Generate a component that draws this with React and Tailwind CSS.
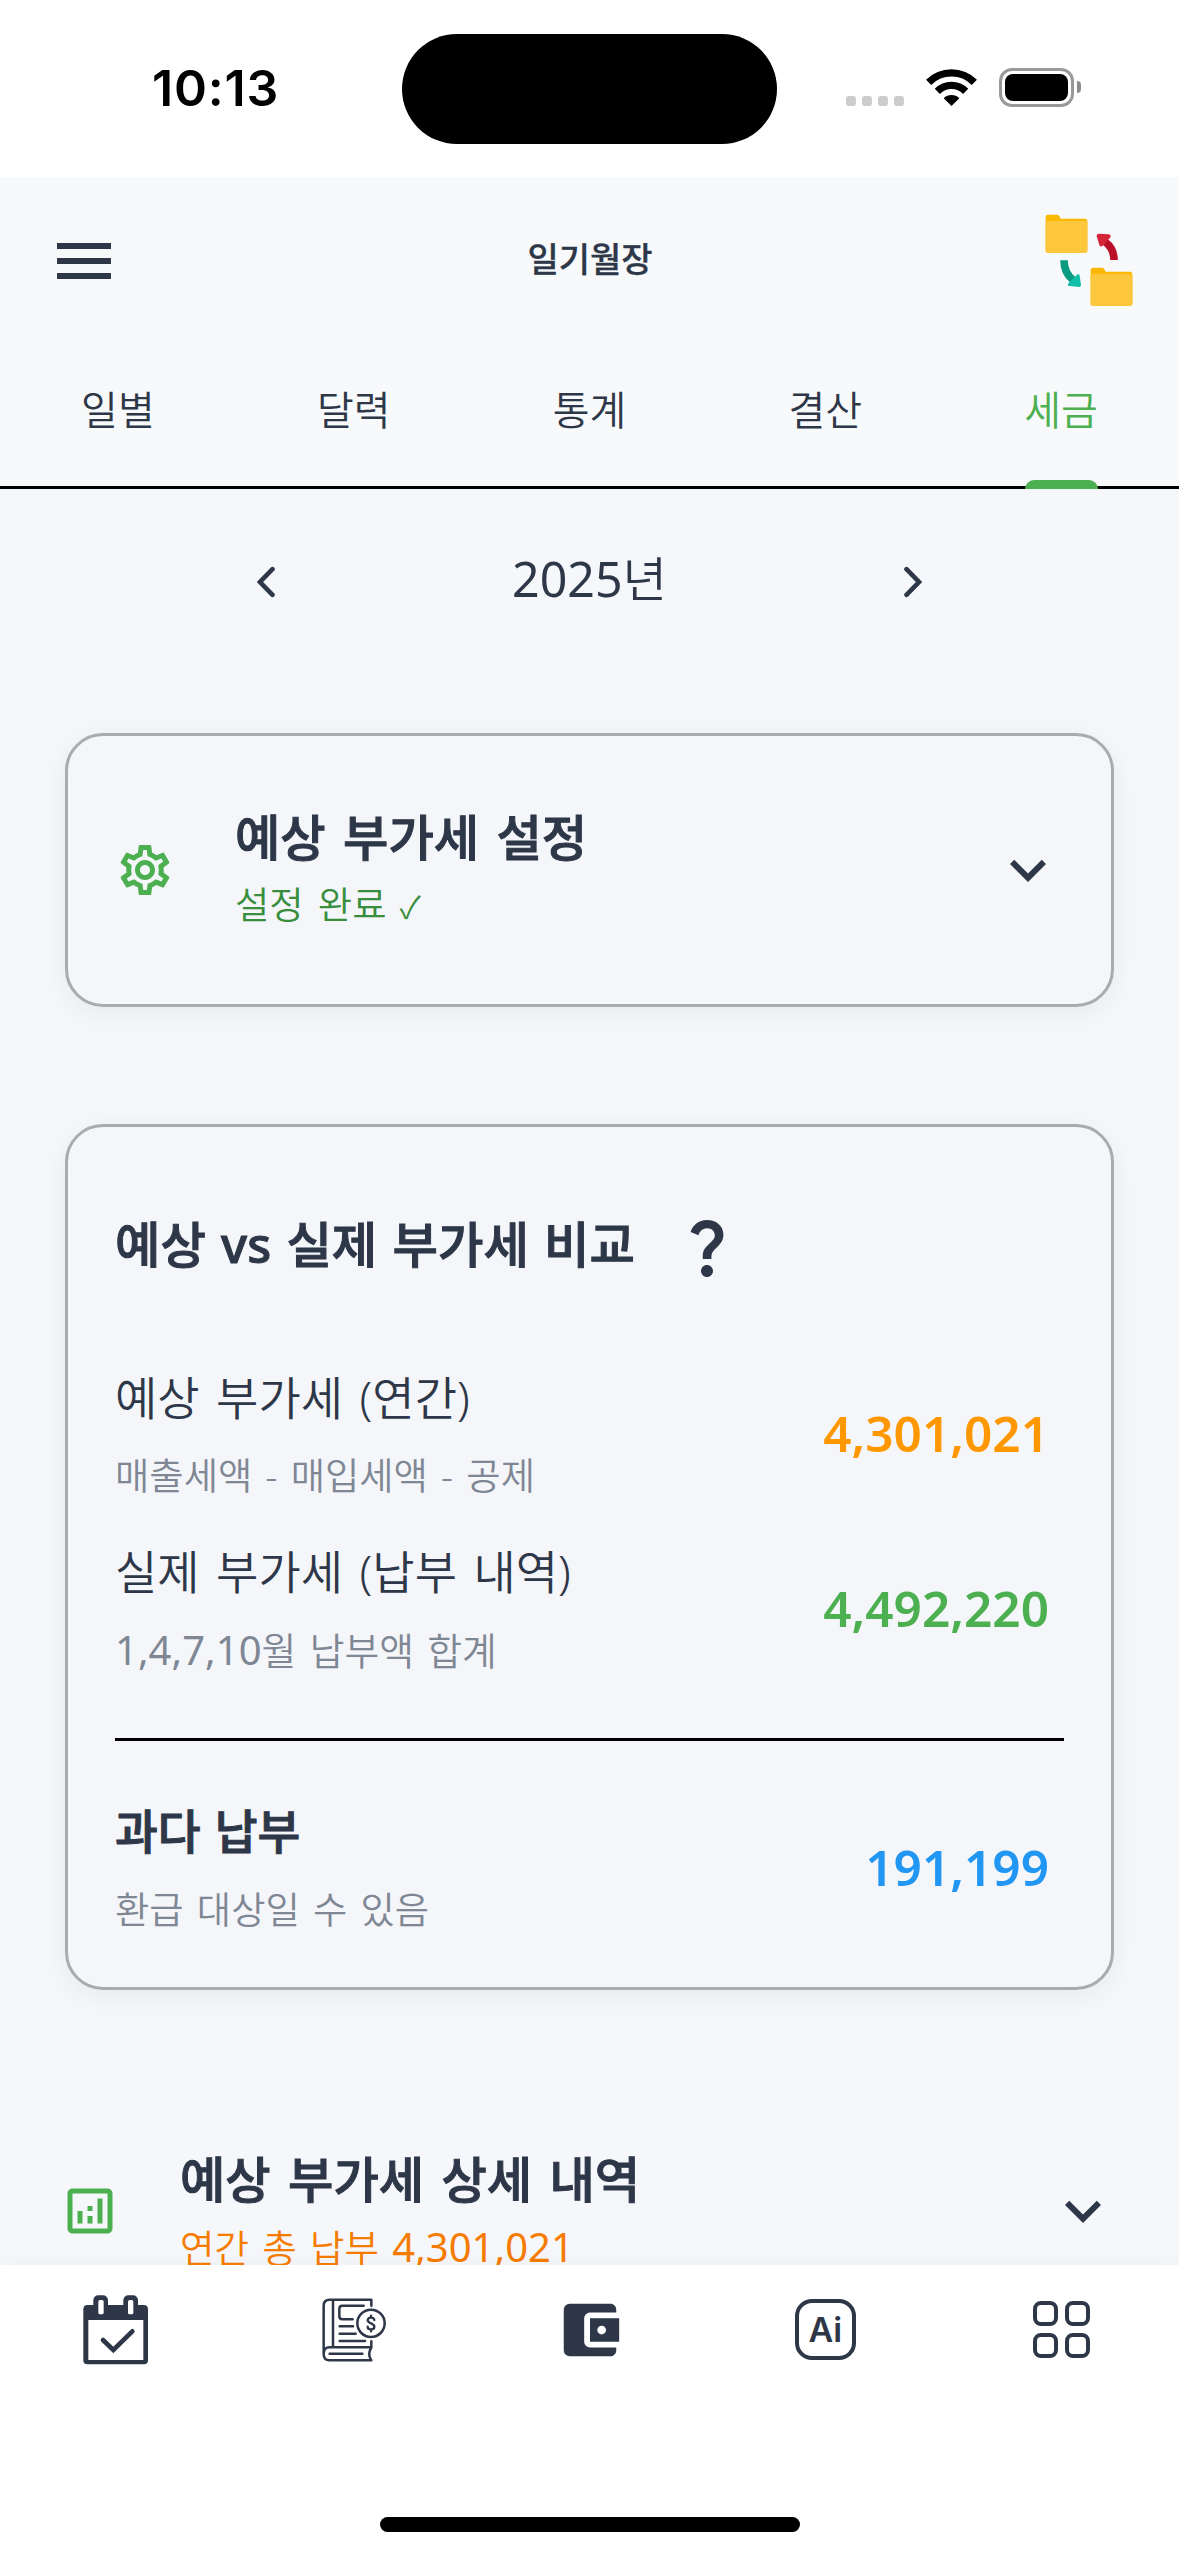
import React from "react";
import {
  MdMenu,
  MdOutlineSettings,
  MdKeyboardArrowDown,
  MdQuestionMark,
  MdOutlineAnalytics,
  MdAccountBalanceWallet,
} from "react-icons/md";

const tabs = ["일별", "달력", "통계", "결산", "세금"];

function StatusBar() {
  return (
    <div className="relative flex h-[177px] shrink-0 items-start justify-between bg-white pl-[152px] pr-[98px]">
      <span className="mt-[58px] font-[Inter,sans-serif] text-[50px] font-semibold leading-[60px] tracking-[0.8px] text-black">
        10:13
      </span>
      <div className="absolute left-[402px] top-[34px] h-[110px] w-[375px] rounded-full bg-black" />
      <div className="mt-[68px] flex items-start">
        <div className="mt-[28px] flex gap-[6px]">
          {[0, 1, 2, 3].map((i) => (
            <span key={i} className="size-[10px] rounded-[3px] bg-[#cccccc]" />
          ))}
        </div>
        <svg className="ml-[22px] h-[39px] w-[51px]" viewBox="288 54 153 117" fill="none" stroke="#000" strokeWidth="22">
          <path d="M296 97a97 97 0 0 1 137 0" />
          <path d="M322 124a60 60 0 0 1 85 0" />
          <path d="M341 145a33 33 0 0 1 47 0L364.500 168Z" fill="#000" stroke="none" />
        </svg>
        <div className="ml-[22px] flex h-[39px] w-[75px] rounded-[13px] border-[3px] border-[#999999] p-[3px]">
          <div className="flex-1 rounded-[8px] bg-black" />
        </div>
        <div className="ml-[3px] mt-[13px] h-[12px] w-[4px] rounded-r-full bg-[#8c8c8c]" />
      </div>
    </div>
  );
}

function Folder({ x, y }) {
  return (
    <g transform={`translate(${x} ${y})`}>
      <path d="M1 22V7q0-7 7-7h27q6 0 8 6l3 6h72q8 0 8 8v10H1Z" fill="#fbb800" />
      <rect x="0" y="19" width="127" height="96" rx="8" fill="#fcc63d" />
    </g>
  );
}

function FolderSwap() {
  return (
    <svg className="h-[94px] w-[90px]" viewBox="135 74 270 282">
      <Folder x={136} y={76} />
      <Folder x={271} y={235} />
      <path d="M342 212q0-34-26-54" fill="none" stroke="#ba1029" strokeWidth="23" />
      <path d="M297 136l29 2q5 1 2 5l-22 24q-4 3-5-1l-8-26q0-4 4-4Z" fill="#d32739" stroke="#d32739" strokeWidth="6" />
      <path d="M192 213q0 38 27 59" fill="none" stroke="#0b9b80" strokeWidth="23" />
      <path d="M206 284l27-27q3-2 4 2l4 28q0 4-4 4l-28-3q-5 0-3-4Z" fill="#10bfa8" stroke="#10bfa8" strokeWidth="4" />
    </svg>
  );
}

function Header() {
  return (
    <header className="h-[312px] shrink-0 border-b-[3px] border-black bg-[#f7f9fa] text-[#2d3748]">
      <div className="grid h-[165px] grid-cols-[1fr_auto_1fr] items-center pl-12 pr-[44px]">
        <MdMenu className="mt-[3px] size-[72px]" />
        <h1 className="mb-[2px] -ml-[3px] text-[34px] font-medium leading-[60px] [-webkit-text-stroke:0.3px]">일기월장</h1>
        <div className="mt-[3px] justify-self-end">
          <FolderSwap />
        </div>
      </div>
      <nav className="grid h-[147px] grid-cols-5">
        {tabs.map((t) => (
          <div
            key={t}
            className={
              t === "세금"
                ? "flex flex-col items-center text-[40px] text-[#4caf50]"
                : "flex flex-col items-center text-[40px]"
            }
          >
            <span className="mt-[38px] leading-[60px]">{t}</span>
            {t === "세금" && <span className="mt-[40px] h-[9px] w-[73px] shrink-0 rounded-t-[9px] bg-[#4caf50]" />}
          </div>
        ))}
      </nav>
    </header>
  );
}

function Chevron({ d }) {
  return (
    <svg className="h-[32px] w-[18px]" viewBox="0 0 18 32" fill="none" stroke="currentColor" strokeWidth="4.600" strokeLinecap="round">
      <path d={d} />
    </svg>
  );
}

function YearPicker() {
  return (
    <div className="mx-[257px] flex h-[185px] items-center justify-between">
      <Chevron d="M15.500 3.200L3 16l12.500 12.800" />
      <span className="mb-[7px] text-[48.300px] leading-[60px]">
        <span className="font-normal">2025</span>년
      </span>
      <Chevron d="M2.500 3.200L15 16L2.500 28.800" />
    </div>
  );
}

function Panel({ className, children }) {
  return (
    <section
      className={`mx-[65px] rounded-[38px] border-[3px] border-[#a9abae] bg-[#f4f6fa] shadow-[0_6px_30px_rgba(0,0,0,0.06)] ${className}`}
    >
      {children}
    </section>
  );
}

function Expandable({ icon, title, sub, subClass, textClass }) {
  return (
    <div className="flex items-center">
      <div className="shrink-0">{icon}</div>
      <div className={`ml-[60px] flex-1 ${textClass}`}>
        <h2 className="text-[49.300px] font-medium leading-[72px] [-webkit-text-stroke:1px] [word-spacing:4.500px]">{title}</h2>
        <p className={`leading-[63px] ${subClass}`}>{sub}</p>
      </div>
      <MdKeyboardArrowDown className="size-[72px]" />
    </div>
  );
}

function Row({ label, sub, value, valueClass, strong }) {
  return (
    <div className="flex h-[155px] items-center justify-between">
      <div>
        <p
          className={
            strong
              ? "text-[46.500px] font-medium leading-[76px] [-webkit-text-stroke:1px] [word-spacing:2px]"
              : "text-[46px] leading-[76px] [word-spacing:4.500px]"
          }
        >
          {label}
        </p>
        <p className="mt-[3px] text-[37.300px] leading-[75px] text-[#808794] [word-spacing:3.500px]">{sub}</p>
      </div>
      <span className={`mb-[6px] mr-[15px] text-[49.500px] font-semibold leading-[60px] ${valueClass}`}>{value}</span>
    </div>
  );
}

function Comparison() {
  return (
    <Panel className="mt-[117px] h-[866px] px-[47px] pt-[67px]">
      <div className="mb-16 flex h-[100px] items-center">
        <h2 className="w-[520px] whitespace-nowrap text-[49.400px] font-medium leading-[72px] [-webkit-text-stroke:1px] [word-spacing:2.400px]">
          예상 vs 실제 부가세 비교
        </h2>
        <MdQuestionMark className="ml-[36px] mt-[6px] size-[72px]" />
      </div>
      <div className="flex flex-col gap-5">
        <Row label="예상 부가세 (연간)" sub="매출세액 - 매입세액 - 공제" value="4,301,021" valueClass="text-[#ff9800]" />
        <Row
          label="실제 부가세 (납부 내역)"
          sub={
            <>
              <span className="text-[40px] font-normal">1,4,7,10</span>
              <span className="text-[37.800px]">월 납부액 합계</span>
            </>
          }
          value="4,492,220"
          valueClass="text-[#4caf50]"
        />
      </div>
      <div className="mb-[51px] mt-[50px] h-[3px] bg-black" />
      <Row strong label="과다 납부" sub="환급 대상일 수 있음" value="191,199" valueClass="text-[#2196f3]" />
    </Panel>
  );
}

function CalendarIcon() {
  return (
    <svg className="h-[70px] w-[66px]" viewBox="68 43 198 210" fill="none" stroke="#2d3748">
      <path d="M82 73h168q13 0 13 13v153q0 12-12 12H81q-12 0-12-12V86q0-13 13-13Z" fill="#2d3748" stroke="none" />
      <path d="M84 118h165v120H84Z" fill="#fff" stroke="none" />
      <rect x="99" y="44" width="44" height="60" rx="15" fill="#2d3748" stroke="none" />
      <rect x="189" y="44" width="44" height="60" rx="15" fill="#2d3748" stroke="none" />
      <rect x="114" y="58" width="16" height="43" rx="5" fill="#fff" stroke="none" />
      <rect x="203" y="58" width="16" height="43" rx="5" fill="#fff" stroke="none" />
      <path d="M128 178l31 30 57-56" strokeWidth="14" strokeLinecap="round" />
    </svg>
  );
}

function LedgerIcon() {
  return (
    <svg
      className="h-[64px] w-[64px]"
      viewBox="785 53 192 192"
      fill="none"
      stroke="#2d3748"
      strokeWidth="7.500"
      strokeLinecap="round"
      strokeLinejoin="round"
    >
      <path d="M933 76V58H808q-18 0-18 18v146M818 58v142M933 183v18H808q-18 0-18 20t18 19h125q-13-20 0-38" />
      <path d="M808 220h98" />
      <path d="M910 76h-64q-9 0-9 9v23q0 9 9 9h31" />
      <path d="M838 138h40M838 160h48M838 182h76" />
      <circle cx="932" cy="129" r="41" />
      <path d="M942 119q-2-7-10-7t-10 7q0 6 10 10t10 10q0 8-10 8t-10-8M932 106v6M932 147v6" strokeWidth="7" />
    </svg>
  );
}

function BottomNav() {
  return (
    <footer className="relative z-10 flex h-[291px] shrink-0 flex-col items-center bg-white text-[#2d3748] shadow-[0_-3px_20px_rgba(0,0,0,0.03)]">
      <nav className="grid h-[129px] w-full grid-cols-5 items-center justify-items-center">
        <div className="mr-[4px]">
          <CalendarIcon />
        </div>
        <LedgerIcon />
        <MdAccountBalanceWallet className="ml-px size-[70px]" />
        <div className="flex size-[61px] items-center justify-center rounded-[17px] border-4 border-[#2d3748] font-[Inter,sans-serif] text-[34px] font-semibold leading-none">
          Ai
        </div>
        <div className="grid grid-cols-2 gap-[7px]">
          {[0, 1, 2, 3].map((i) => (
            <span key={i} className="size-[25px] rounded-[8px] border-4 border-[#2d3748]" />
          ))}
        </div>
      </nav>
      <div className="mt-[123px] h-[15px] w-[420px] rounded-full bg-black" />
    </footer>
  );
}

export default function App() {
  return (
    <div className="flex h-[2556px] w-[1179px] flex-col overflow-hidden bg-[#f6f7fb] font-['Noto_Sans','Noto_Sans_CJK_KR',sans-serif] [font-weight:350] text-[#2d3748]">
      <StatusBar />
      <Header />
      <main className="min-h-0 flex-1 overflow-hidden">
        <YearPicker />
        <Panel className="mt-[59px] flex h-[274px] flex-col justify-center px-[47px]">
          <Expandable
            icon={<MdOutlineSettings className="size-[60px] text-[#4caf50]" />}
            title="예상 부가세 설정"
            sub={
              <>
                설정 완료 <span className="-ml-px text-[31px]">✓</span>
              </>
            }
            subClass="text-[37.300px] text-[#388e3c] [word-spacing:4.500px]"
            textClass="-mt-px"
          />
        </Panel>
        <Comparison />
        <div className="mx-[60px] mt-[153px]">
          <Expandable
            icon={<MdOutlineAnalytics className="size-[60px] text-[#4caf50]" />}
            title="예상 부가세 상세 내역"
            sub={
              <>
                연간 총 납부 <span className="text-[40px] font-normal">4,301,021</span>
              </>
            }
            subClass="text-[37.500px] text-[#f57c00] [word-spacing:3.500px]"
            textClass=""
          />
        </div>
      </main>
      <BottomNav />
    </div>
  );
}
